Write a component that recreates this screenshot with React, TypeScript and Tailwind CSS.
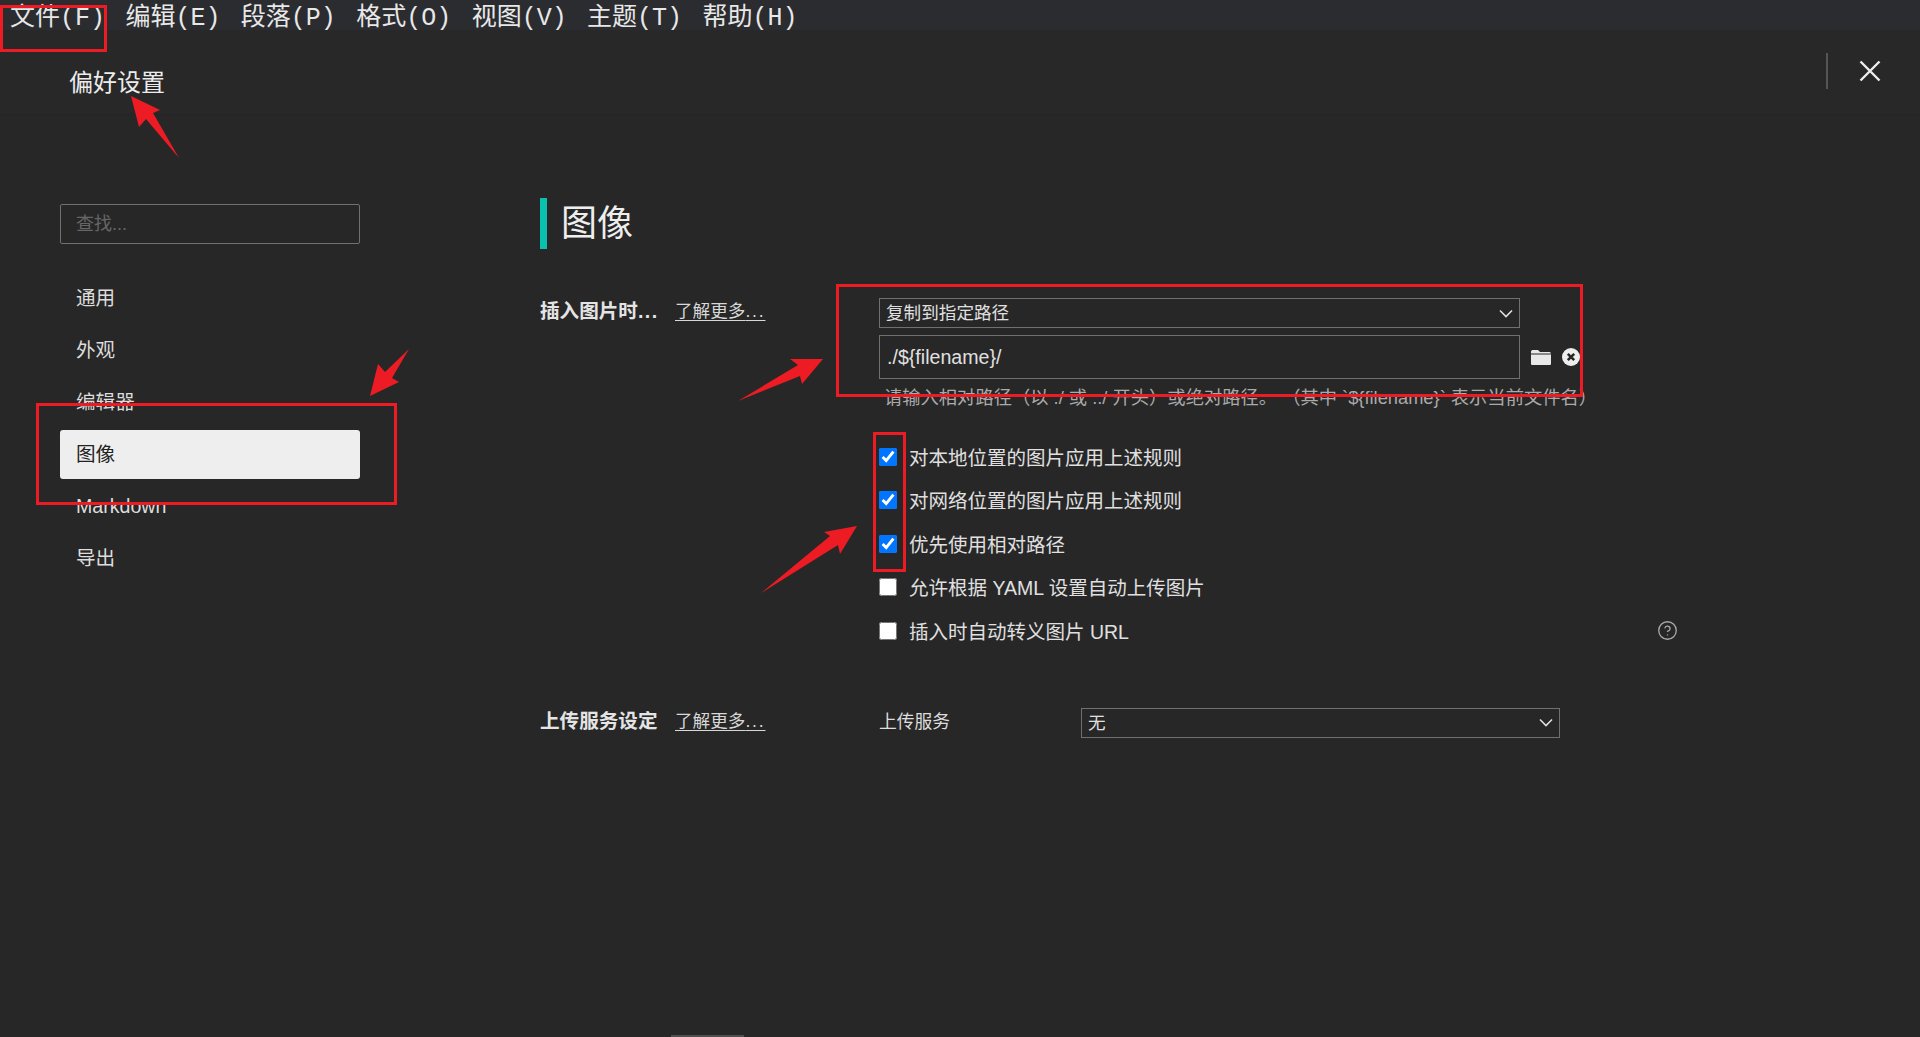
import { CircleHelp } from "lucide-react";

const menus = ["文件(F)", "编辑(E)", "段落(P)", "格式(O)", "视图(V)", "主题(T)", "帮助(H)"];
const sideItems = ["通用", "外观", "编辑器", "图像", "Markdown", "导出"];
const checks = [
  { label: "对本地位置的图片应用上述规则", checked: true },
  { label: "对网络位置的图片应用上述规则", checked: true },
  { label: "优先使用相对路径", checked: true },
  { label: "允许根据 YAML 设置自动上传图片", checked: false },
  { label: "插入时自动转义图片 URL", checked: false },
];

function Chevron() {
  return (
    <svg width="14" height="9" viewBox="0 0 14 9" fill="none" stroke="#e0e0e0" strokeWidth="1.6">
      <path d="M1 1.5 L7 7.5 L13 1.5" />
    </svg>
  );
}

function SectionLabel({ title, dots }: { title: string; dots?: boolean }) {
  return (
    <div className="w-[339px] shrink-0 flex items-start h-[30px] gap-[17px] pt-[1px] leading-[24px]">
      <span className="w-[118px] whitespace-nowrap text-[19.6px] font-bold text-[#e4e4e4]">
        {title}
        {dots && <span className="tracking-[1.4px]">...</span>}
      </span>
      <span className="text-[17.6px] underline underline-offset-[3px] text-[#d8d8d8] whitespace-nowrap">
        了解更多<span className="tracking-[1.8px]">...</span>
      </span>
    </div>
  );
}

function Annotations() {
  return (
    <>
      <div className="absolute left-0 top-[5px] w-[107px] h-[47px] border-[3px] border-[#ed1c24]" />
      <div className="absolute left-[36px] top-[403px] w-[361px] h-[102px] border-[3px] border-[#ed1c24]" />
      <div className="absolute left-[836px] top-[284px] w-[747px] h-[113px] border-[3px] border-[#ed1c24]" />
      <div className="absolute left-[873px] top-[432px] w-[33px] h-[140px] border-[3px] border-[#ed1c24]" />
      <svg className="absolute left-0 top-0" width="1920" height="1037" fill="#ed1c24">
        <polygon points="131,96 160,110 153,113 179,158 146,119 139,127" />
        <polygon points="370,396 378,364 385,372 409,349 392,378 399,382" />
        <polygon points="823,359 790,359 798,365 738,401 800,376 802,384" />
        <polygon points="857,526 824,532 830,536 761,593 838,545 840,554" />
      </svg>
    </>
  );
}

export default function App() {
  return (
    <div className="relative h-[1037px] w-[1920px] overflow-hidden flex flex-col bg-[#272727] text-[#e0e0e0] font-['Liberation_Sans','Noto_Sans_CJK_SC',sans-serif]">
      <div className="h-[30px] shrink-0 bg-[#2b2c30] flex pl-[10px] gap-[20.4px] font-['Liberation_Mono','Noto_Sans_CJK_SC',monospace] text-[25px] leading-[38px] text-[#e8e8e8] whitespace-nowrap">
        {menus.map((m) => (
          <span key={m}>{m}</span>
        ))}
      </div>

      <div className="h-[85px] shrink-0 border-b border-[#252525] bg-[#282828] flex items-start justify-between pl-[69px]">
        <span className="text-[24px] leading-[36px] mt-[35px] text-[#ececec]">偏好设置</span>
        <div className="flex items-center mt-[23px] mr-[39px]">
          <div className="w-[2px] h-[36px] bg-[#555555] mr-[31px]" />
          <svg width="22" height="22" viewBox="0 0 22 22" stroke="#eeeeee" strokeWidth="2.4">
            <path d="M1.5 1.5 L20.5 20.5 M20.5 1.5 L1.5 20.5" />
          </svg>
        </div>
      </div>

      <div className="flex flex-1">
        <aside className="w-[540px] shrink-0 pl-[60px] pt-[89px]">
          <div className="w-[300px] h-[40px] border border-[#707070] rounded-[2px] px-[15px] flex items-center text-[18px] text-[#666666] mb-[30px]">
            查找...
          </div>
          {sideItems.map((item) => (
            <div
              key={item}
              className={
                item === "图像"
                  ? "w-[300px] h-[49px] mb-[3px] px-[16px] flex items-center rounded-[3px] bg-[#eeeeee] text-[19.6px] text-[#222222]"
                  : "w-[300px] h-[49px] mb-[3px] px-[16px] pt-[1px] flex items-center text-[19.6px] text-[#dddddd]"
              }
            >
              {item}
            </div>
          ))}
        </aside>

        <main className="flex-1 pt-[83px]">
          <div className="h-[51px] border-l-[7px] border-[#0cc0af] pl-[14px] pt-[1px] flex items-center text-[36px] text-[#eeeeee]">
            图像
          </div>

          <div className="flex mt-[49px]">
            <SectionLabel title="插入图片时" dots />
            <div className="flex-1">
              <div className="w-[641px] h-[30px] border border-[#707070] flex items-center justify-between pl-[6px] pr-[6px] text-[17.6px] leading-[24px]">
                <span>复制到指定路径</span>
                <Chevron />
              </div>
              <div className="flex items-center mt-[7px]">
                <div className="w-[641px] h-[44px] border border-[#707070] flex items-center pl-[7px] pt-[1px] text-[19.6px]">
                  ./{"${filename}"}/
                </div>
                <svg className="ml-[11px]" width="20" height="16" viewBox="0 0 20 16" fill="#e8e8e8">
                  <path d="M0 3 C0 1.5 1 1 2 1 L7 1 L9 3 L18 3 C19 3 20 3.5 20 4.5 L0 4.5 Z M0 5.5 L20 5.5 L20 14.5 C20 15.5 19.5 16 18.5 16 L1.5 16 C0.5 16 0 15.5 0 14.5 Z" />
                </svg>
                <svg className="ml-[11px]" width="18" height="18" viewBox="0 0 18 18">
                  <circle cx="9" cy="9" r="9" fill="#eeeeee" />
                  <path d="M5.8 5.8 L12.2 12.2 M12.2 5.8 L5.8 12.2" stroke="#282828" strokeWidth="2.6" />
                </svg>
              </div>
              <div className="text-[18.3px] leading-[22px] mt-[8px] pl-[5px] text-[#aaaaaa] whitespace-pre">
                请输入相对路径（以 ./ 或 ../ 开头）或绝对路径。 （其中 `{"${filename}"}` 表示当前文件名）
              </div>
              <div className="mt-[26px] w-[799px]">
                {checks.map((c) => (
                  <label key={c.label} className="flex items-center h-[43.5px] text-[19.5px] text-[#e0e0e0] whitespace-nowrap">
                    <input type="checkbox" readOnly checked={c.checked} className="w-[18px] h-[18px] m-0 mr-[12px] accent-[#0075ff]" />
                    <span className="flex-1 pt-[3px]">{c.label}</span>
                    {c.label.startsWith("插入") && <CircleHelp size={21} strokeWidth={1.5} className="text-[#aaaaaa]" />}
                  </label>
                ))}
              </div>
            </div>
          </div>

          <div className="flex mt-[55px]">
            <SectionLabel title="上传服务设定" />
            <div className="w-[202px] flex items-center text-[17.8px] text-[#dddddd]">上传服务</div>
            <div className="w-[479px] h-[30px] border border-[#707070] flex items-center justify-between pl-[6px] pr-[6px] text-[17.6px] leading-[24px]">
              <span>无</span>
              <Chevron />
            </div>
          </div>
        </main>
      </div>

      <div className="absolute left-[671px] bottom-0 w-[73px] h-[2px] bg-[#505050]" />
      <Annotations />
    </div>
  );
}
